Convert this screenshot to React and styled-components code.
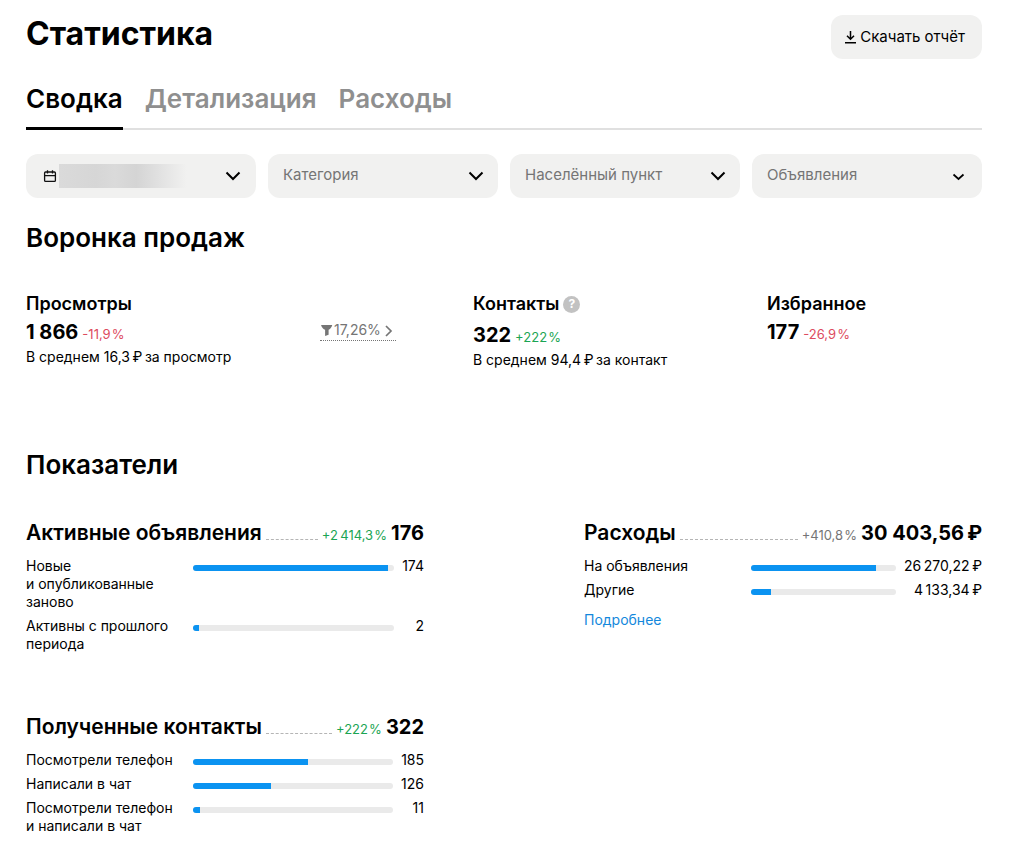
import React from "react";
import styled, { createGlobalStyle } from "styled-components";

const GlobalStyle = createGlobalStyle`
  *, *::before, *::after { box-sizing: border-box; }
  body {
    margin: 0;
    background: #fff;
    color: #000;
    font-family: Inter, "Noto Sans", sans-serif;
    font-size: 14px;
    line-height: 18px;
  }
  h1, h2, h3, p, ul { margin: 0; padding: 0; }
  ul { list-style: none; }
  button, select { font: inherit; color: inherit; border: 0; cursor: pointer; }
  a { text-decoration: none; }
  svg { display: block; flex: none; }
`;

const Page = styled.main`
  padding: 15px 30px 30px 26px;
`;

const Header = styled.header`
  display: flex;
  justify-content: space-between;
  align-items: flex-start;
`;

const PageTitle = styled.h1`
  font-size: 32px;
  line-height: 38px;
  font-weight: 700;
`;

const DownloadButton = styled.button`
  display: flex;
  align-items: center;
  gap: 3px;
  height: 44px;
  padding: 0 17px 0 13px;
  border-radius: 12px;
  background: #f1f1f0;
  font-size: 15px;
  white-space: nowrap;
`;

const Tabs = styled.nav`
  display: flex;
  gap: 22px;
  margin-top: 22px;
  box-shadow: inset 0 -2px #e0e0e0;
`;

const Tab = styled.a`
  padding-bottom: 10px;
  border-bottom: 3px solid ${(p) => (p.$active ? "#000" : "transparent")};
  color: ${(p) => (p.$active ? "#000" : "#8f8f8f")};
  font-size: 26px;
  line-height: 36px;
  font-weight: 600;
`;

const Filters = styled.div`
  display: grid;
  grid-template-columns: repeat(4, 1fr);
  gap: 12px;
  margin-top: 24px;
`;

const DateButton = styled.button`
  display: flex;
  align-items: center;
  gap: 2px;
  height: 44px;
  padding: 0 14px 0 17px;
  border-radius: 12px;
  background: #f1f1f0;
`;

const DateMask = styled.span`
  flex: 1;
  height: 24px;
  margin-right: 30px;
  background: linear-gradient(90deg, #dadada 0%, #d6d6d6 28%, #dadada 42%, #d4d4d4 58%, #e0e0e0 74%, #f1f1f0 96%);
`;

const SelectBox = styled.label`
  display: grid;
  align-items: center;

  > * { grid-area: 1 / 1; }
  > svg { justify-self: end; margin-right: 13px; pointer-events: none; }
`;

const Select = styled.select`
  appearance: none;
  width: 100%;
  min-width: 0;
  height: 44px;
  padding: 0 40px 2px 15px;
  border-radius: 12px;
  background: #f1f1f0;
  color: #757575;
  font-size: 15px;
`;

const SectionTitle = styled.h2`
  margin-top: ${(p) => p.$top}px;
  font-size: 26px;
  line-height: 32px;
  font-weight: 600;
`;

const Funnel = styled.div`
  display: grid;
  grid-template-columns: 294fr 153fr 294fr 215fr;
  align-items: start;
  margin-top: 38px;
`;

const MetricTitle = styled.h3`
  display: flex;
  align-items: center;
  gap: 4px;
  font-size: 18px;
  line-height: 24px;
  font-weight: 600;
  margin-bottom: ${(p) => (p.$withHint ? 5 : 2)}px;
`;

const HintButton = styled.button`
  display: grid;
  place-items: center;
  width: 17px;
  height: 17px;
  padding: 0;
  border-radius: 50%;
  background: #c2c2c2;
  color: #fff;
  font-size: 12px;
  line-height: 16px;
  font-weight: 700;
`;

const MetricValue = styled.p`
  display: flex;
  align-items: baseline;
  gap: 4px;
  font-size: 20px;
  line-height: 28px;
  font-weight: 700;
`;

const changeColors = { up: "#1ba553", down: "#dd4b5e", neutral: "#757575" };

const Change = styled.span`
  color: ${(p) => changeColors[p.$tone]};
  font-size: 13px;
  line-height: 18px;
  font-weight: 400;
  white-space: nowrap;
`;

const MetricNote = styled.p`
  line-height: 22px;
`;

const Conversion = styled.a`
  display: flex;
  align-items: center;
  justify-self: start;
  gap: 1px;
  margin-top: 28px;
  border-bottom: 1px dotted #757575;
  color: #757575;
  line-height: 20px;
`;

const Cards = styled.div`
  display: grid;
  grid-template-columns: 1fr 1fr;
  gap: 60px 160px;
  align-items: start;
  margin-top: 38px;
`;

const CardHead = styled.div`
  display: flex;
  align-items: baseline;
  gap: 4px;
  line-height: 28px;
`;

const CardTitle = styled.h3`
  font-size: 21px;
  font-weight: 600;
  white-space: nowrap;
`;

const Leader = styled.span`
  flex: 1;
  border-bottom: 1px dashed #b5b5b5;
`;

const CardTotal = styled.span`
  font-size: 20px;
  font-weight: 700;
  white-space: nowrap;
`;

const Rows = styled.ul`
  display: grid;
  grid-template-columns: 42% 1fr auto;
  row-gap: 6px;
  margin-top: 10px;
`;

const Row = styled.li`
  display: grid;
  grid-column: 1 / -1;
  grid-template-columns: subgrid;
`;

const RowLabel = styled.span`
  padding-right: 16px;
`;

const Track = styled.span`
  height: 6px;
  margin-top: 8px;
  border-radius: 3px;
  background: #eaeaea;
  overflow: hidden;
`;

const Fill = styled.span`
  display: block;
  height: 100%;
  background: #0b93f1;
`;

const RowValue = styled.span`
  padding-left: 8px;
  text-align: right;
  white-space: nowrap;
`;

const MoreLink = styled.a`
  display: inline-block;
  margin-top: 12px;
  color: #1388dc;
`;

const Chevron = ({ small }) => (
  <svg width="18" height="18" viewBox="0 0 18 18" fill="none" stroke="#000" strokeWidth={small ? 1.7 : 2}>
    <path d={small ? "M2.500 7.500l5 4.500 5-4.500" : "M2.500 5.500l6.500 6.500 6.500-6.500"} />
  </svg>
);

const DownloadIcon = () => (
  <svg width="13" height="16" viewBox="0 0 13 16" fill="none" stroke="#000" strokeWidth="1.500">
    <path d="M6.500 2v8M3 6.800l3.500 3.500L10 6.800M1 13.800h11" />
  </svg>
);

const CalendarIcon = () => (
  <svg width="14" height="14" viewBox="0 0 14 14" fill="none" stroke="#111" strokeWidth="1.300">
    <rect x="1.600" y="3" width="10.800" height="9.400" rx="1" />
    <path d="M1.600 6.600h10.800M4.500 1.200v3.400M9.500 1.200v3.400" />
  </svg>
);

const FunnelIcon = () => (
  <svg width="13" height="12" viewBox="0 0 13 12" fill="#757575">
    <path d="M1.500 1h10.300c.4 0 .5.400.3.700C11.300 3.600 10 5 8.600 5.800v4.900L5.100 12V5.800C3.400 5 2 3.600 1.200 1.700 1 1.400 1.200 1 1.500 1z" />
  </svg>
);

const ArrowRight = () => (
  <svg width="14" height="14" viewBox="0 0 14 14" fill="none" stroke="#757575" strokeWidth="1.700">
    <path d="M4 3l5 5-5 5" />
  </svg>
);

const cards = [
  {
    title: "Активные объявления",
    change: "+2\u2009414,3\u200a%",
    tone: "up",
    total: "176",
    rows: [
      { label: "Новые и\u00a0опубликованные заново", value: "174", share: 97 },
      { label: "Активны с\u00a0прошлого периода", value: "2", share: 3 },
    ],
  },
  {
    title: "Расходы",
    change: "+410,8\u200a%",
    tone: "neutral",
    total: "30\u00a0403,56\u2009₽",
    rows: [
      { label: "На объявления", value: "26\u2009270,22\u2009₽", share: 86.4 },
      { label: "Другие", value: "4\u2009133,34\u2009₽", share: 13.6 },
    ],
    more: "Подробнее",
  },
  {
    title: "Полученные контакты",
    change: "+222\u200a%",
    tone: "up",
    total: "322",
    rows: [
      { label: "Посмотрели телефон", value: "185", share: 57.5 },
      { label: "Написали в чат", value: "126", share: 39.1 },
      { label: "Посмотрели телефон и\u00a0написали в\u00a0чат", value: "11", share: 3.4 },
    ],
  },
];

const Card = ({ title, change, tone, total, rows, more }) => (
  <section>
    <CardHead>
      <CardTitle>{title}</CardTitle>
      <Leader />
      <Change $tone={tone}>{change}</Change>
      <CardTotal>{total}</CardTotal>
    </CardHead>
    <Rows>
      {rows.map((row) => (
        <Row key={row.label}>
          <RowLabel>{row.label}</RowLabel>
          <Track>
            <Fill style={{ width: `${row.share}%` }} />
          </Track>
          <RowValue>{row.value}</RowValue>
        </Row>
      ))}
    </Rows>
    {more && <MoreLink href="#more">{more}</MoreLink>}
  </section>
);

const FilterSelect = ({ name, smallArrow }) => (
  <SelectBox>
    <Select aria-label={name} defaultValue="">
      <option value="">{name}</option>
    </Select>
    <Chevron small={smallArrow} />
  </SelectBox>
);

export default function App() {
  return (
    <>
      <GlobalStyle />
      <Page>
        <Header>
          <PageTitle>Статистика</PageTitle>
          <DownloadButton type="button">
            <DownloadIcon />
            Скачать отчёт
          </DownloadButton>
        </Header>

        <Tabs>
          <Tab href="#summary" $active aria-current="page">Сводка</Tab>
          <Tab href="#details">Детализация</Tab>
          <Tab href="#expenses">Расходы</Tab>
        </Tabs>

        <Filters>
          <DateButton type="button" aria-label="Период">
            <CalendarIcon />
            <DateMask />
            <Chevron />
          </DateButton>
          <FilterSelect name="Категория" />
          <FilterSelect name="Населённый пункт" />
          <FilterSelect name="Объявления" smallArrow />
        </Filters>

        <SectionTitle $top={24}>Воронка продаж</SectionTitle>
        <Funnel>
          <div>
            <MetricTitle>Просмотры</MetricTitle>
            <MetricValue>
              {"1\u00a0866"} <Change $tone="down">{"-11,9\u200a%"}</Change>
            </MetricValue>
            <MetricNote>{"В среднем 16,3\u2009₽\u2009за просмотр"}</MetricNote>
          </div>
          <Conversion href="#conversion">
            <FunnelIcon />
            17,26%
            <ArrowRight />
          </Conversion>
          <div>
            <MetricTitle $withHint>
              Контакты <HintButton type="button">?</HintButton>
            </MetricTitle>
            <MetricValue>
              322 <Change $tone="up">{"+222\u200a%"}</Change>
            </MetricValue>
            <MetricNote>{"В среднем 94,4\u2009₽\u2009за контакт"}</MetricNote>
          </div>
          <div>
            <MetricTitle>Избранное</MetricTitle>
            <MetricValue>
              177 <Change $tone="down">{"-26,9\u200a%"}</Change>
            </MetricValue>
          </div>
        </Funnel>

        <SectionTitle $top={78}>Показатели</SectionTitle>
        <Cards>
          {cards.map((card) => (
            <Card key={card.title} {...card} />
          ))}
        </Cards>
      </Page>
    </>
  );
}
